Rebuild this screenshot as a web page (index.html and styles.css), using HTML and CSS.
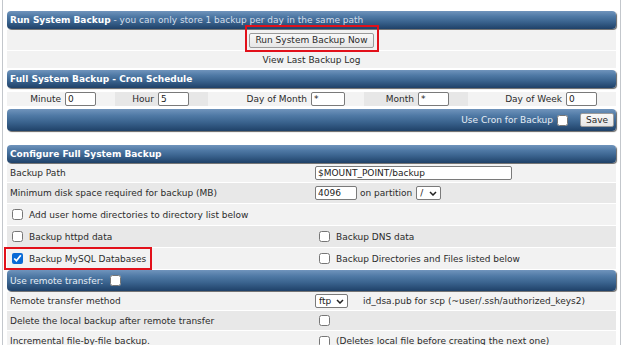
FILE: index.html
```html
<!DOCTYPE html>
<html lang="en">
<head>
    <meta charset="UTF-8">
    <title>System Backup</title>
    <link rel="stylesheet" href="styles.css">
</head>
<body>
<div class="frame">

    <section class="panel">
        <div class="bar head"><b>Run System Backup</b><span class="sub"> - you can only store 1 backup per day in the same path</span></div>
        <div class="row center btn-row">
            <span class="marked marked-btn"><button class="btn">Run System Backup Now</button></span>
        </div>
        <div class="row center log-row"><a class="log" href="#">View Last Backup Log</a></div>
    </section>

    <section class="panel">
        <div class="bar head"><b>Full System Backup - Cron Schedule</b></div>
        <div class="row cron">
            <div class="pair"><label>Minute</label><input type="text" value="0"></div>
            <div class="pair"><label>Hour</label><input type="text" value="5"></div>
            <div class="pair"><label>Day of Month</label><input type="text" value="*" class="wide"></div>
            <div class="pair"><label>Month</label><input type="text" value="*"></div>
            <div class="pair"><label>Day of Week</label><input type="text" value="0"></div>
        </div>
        <div class="bar cron-bar">
            <span>Use Cron for Backup</span>
            <input type="checkbox" class="chk">
            <button class="btn save">Save</button>
        </div>
    </section>

    <section class="panel config">
        <div class="bar head"><b>Configure Full System Backup</b></div>
        <div class="row two light">
            <div class="cell">Backup Path</div>
            <div class="cell right"><input type="text" class="path" value="$MOUNT_POINT/backup"></div>
        </div>
        <div class="row two dark h20">
            <div class="cell">Minimum disk space required for backup (MB)</div>
            <div class="cell right">
                <input type="text" class="mb" value="4096">
                <span class="part">on partition</span>
                <span class="sel"><select class="small"><option>/</option></select><svg viewBox="0 0 8 5" width="8" height="5"><path d="M1 1l3 3 3-3" fill="none" stroke="#222" stroke-width="1.5"/></svg></span>
            </div>
        </div>
        <div class="row light tall">
            <label class="cell check"><input type="checkbox" class="chk"> Add user home directories to directory list below</label>
        </div>
        <div class="row two dark tall">
            <label class="cell check"><input type="checkbox" class="chk"> Backup httpd data</label>
            <label class="cell check right"><input type="checkbox" class="chk"> Backup DNS data</label>
        </div>
        <div class="row two light tall">
            <div class="cell"><label class="check marked marked-db"><input type="checkbox" class="chk" checked> Backup MySQL Databases</label></div>
            <label class="cell check right"><input type="checkbox" class="chk"> Backup Directories and Files listed below</label>
        </div>
        <div class="bar remote">
            <span>Use remote transfer:</span>
            <input type="checkbox" class="chk">
        </div>
        <div class="row two light">
            <div class="cell">Remote transfer method</div>
            <div class="cell right">
                <span class="sel"><select class="method"><option>ftp</option></select><svg viewBox="0 0 8 5" width="8" height="5"><path d="M1 1l3 3 3-3" fill="none" stroke="#222" stroke-width="1.5"/></svg></span>
                <span class="hint">id_dsa.pub for scp (~user/.ssh/authorized_keys2)</span>
            </div>
        </div>
        <div class="row two dark h19">
            <div class="cell">Delete the local backup after remote transfer</div>
            <div class="cell right check"><input type="checkbox" class="chk"></div>
        </div>
        <div class="row two light h20">
            <div class="cell">Incremental file-by-file backup.</div>
            <label class="cell right check"><input type="checkbox" class="chk"> (Deletes local file before creating the next one)</label>
        </div>
    </section>

</div>
</body>
</html>
```

FILE: styles.css
```css
body {
    margin: 0;
    font-family: "DejaVu Sans", Verdana, sans-serif;
    font-size: 9px;
    color: #2b2b2b;
    background-color: #fff;
    overflow: hidden;
}

.frame {
    margin-left: 2px;
    width: 619px;
    min-height: 345px;
    box-sizing: border-box;
    padding: 11px 4px 0 4px;
    border-left: 1px solid #c3c7cc;
    border-right: 1px solid #c3c7cc;
}

.panel + .panel {
    margin-top: 2px;
}

.panel.config {
    margin-top: 14px;
}

/* blue glossy bars */
.bar {
    background: linear-gradient(to bottom, #7094bc 0%, #4f79a5 30%, #3a638e 60%, #1f4168 100%);
    border-radius: 4px;
    box-shadow: 1px 1px 1px rgba(0, 0, 0, 0.6);
    color: #fff;
    display: flex;
    align-items: center;
    box-sizing: border-box;
}

.head {
    height: 18px;
    padding-left: 3px;
}

.head b {
    font-weight: bold;
    white-space: pre;
}

.head .sub {
    color: #d3deea;
    white-space: pre;
}

.row {
    margin-top: 1px;
    background-color: #f2f2f2;
    display: flex;
    align-items: center;
    height: 18px;
}

.row.center {
    justify-content: center;
}

.btn-row {
    height: 20px;
}

.log-row {
    height: 17px;
}

.log {
    color: #2b2b2b;
    text-decoration: none;
}

.btn {
    font-family: inherit;
    font-size: 9px;
    color: #2b2b2b;
    background: linear-gradient(#f8f8f8, #e6e6e6);
    border: 1px solid #9a9a9a;
    border-radius: 2px;
    height: 15px;
    padding: 0 5px;
    margin: 0;
    line-height: 12px;
}

.btn-row .btn {
    width: 125px;
}

/* red annotation boxes */
.marked {
    position: relative;
    display: inline-flex;
}

.marked::after {
    content: "";
    position: absolute;
    border: 2px solid #e2101a;
    pointer-events: none;
}

.marked-btn::after {
    inset: -8px -5px -4px -4px;
}

.marked-db::after {
    inset: -6px -6px -6px -8px;
}

/* cron schedule */
.cron {
    display: grid;
    grid-template-columns: 108px 93px 156px 104px 148px;
    height: 19px;
    background: none;
}

.pair {
    display: flex;
    align-items: center;
    justify-content: flex-end;
    gap: 4px;
    padding-right: 19px;
    background-color: #f3f3f3;
}

.pair:nth-child(even) {
    background-color: #e7e7e7;
}

input[type="text"] {
    font-family: inherit;
    font-size: 9px;
    color: #222;
    height: 14px;
    box-sizing: border-box;
    border: 1px solid #7a7a7a;
    border-radius: 2px;
    padding: 0 2px;
    margin: 0;
    background-color: #fff;
}

.pair input {
    width: 31px;
}

.pair input.wide {
    width: 34px;
}

.cron-bar {
    margin-top: 1px;
    height: 22px;
    justify-content: flex-end;
    padding-right: 2px;
    color: #e6edf5;
}

.chk {
    width: 11px;
    height: 11px;
    margin: 0;
    accent-color: #0a6ad6;
}

.cron-bar .chk {
    margin: 0 12px 0 4px;
}

.save {
    width: 34px;
    height: 14px;
    padding: 0;
}

/* configure section */
.two {
    display: grid;
    grid-template-columns: 306px 1fr;
}

.row.dark {
    background-color: #e8e8e8;
}

.row.tall {
    height: 21px;
}

.row.h20 {
    height: 20px;
}

.row.h19 {
    height: 19px;
}

.cell {
    padding-left: 3px;
    display: flex;
    align-items: center;
    height: 100%;
    white-space: nowrap;
}

.cell.right {
    padding-left: 2px;
}

.check {
    gap: 6px;
}

.cell.check {
    padding-left: 5px;
}

.cell.right.check {
    padding-left: 6px;
}

.cell .check {
    display: inline-flex;
    align-items: center;
    margin-left: 2px;
}

.path {
    width: 197px;
}

.mb {
    width: 42px;
}

.part {
    margin: 0 4px 0 3px;
}

.sel {
    position: relative;
    display: inline-flex;
}

.sel select {
    appearance: none;
    font-family: inherit;
    font-size: 9px;
    color: #222;
    height: 14px;
    border: 1px solid #7a7a7a;
    border-radius: 2px;
    background-color: #fff;
    padding: 0 0 0 3px;
    margin: 0;
}

.sel svg {
    position: absolute;
    right: 4px;
    top: 5px;
    pointer-events: none;
}

select.small {
    width: 25px;
}

select.method {
    width: 33px;
}

.hint {
    margin-left: 15px;
}

.remote {
    margin-top: 1px;
    height: 21px;
    padding-left: 3px;
    color: #e6edf5;
}

.remote .chk {
    margin-left: 7px;
    accent-color: #fff;
}
```
